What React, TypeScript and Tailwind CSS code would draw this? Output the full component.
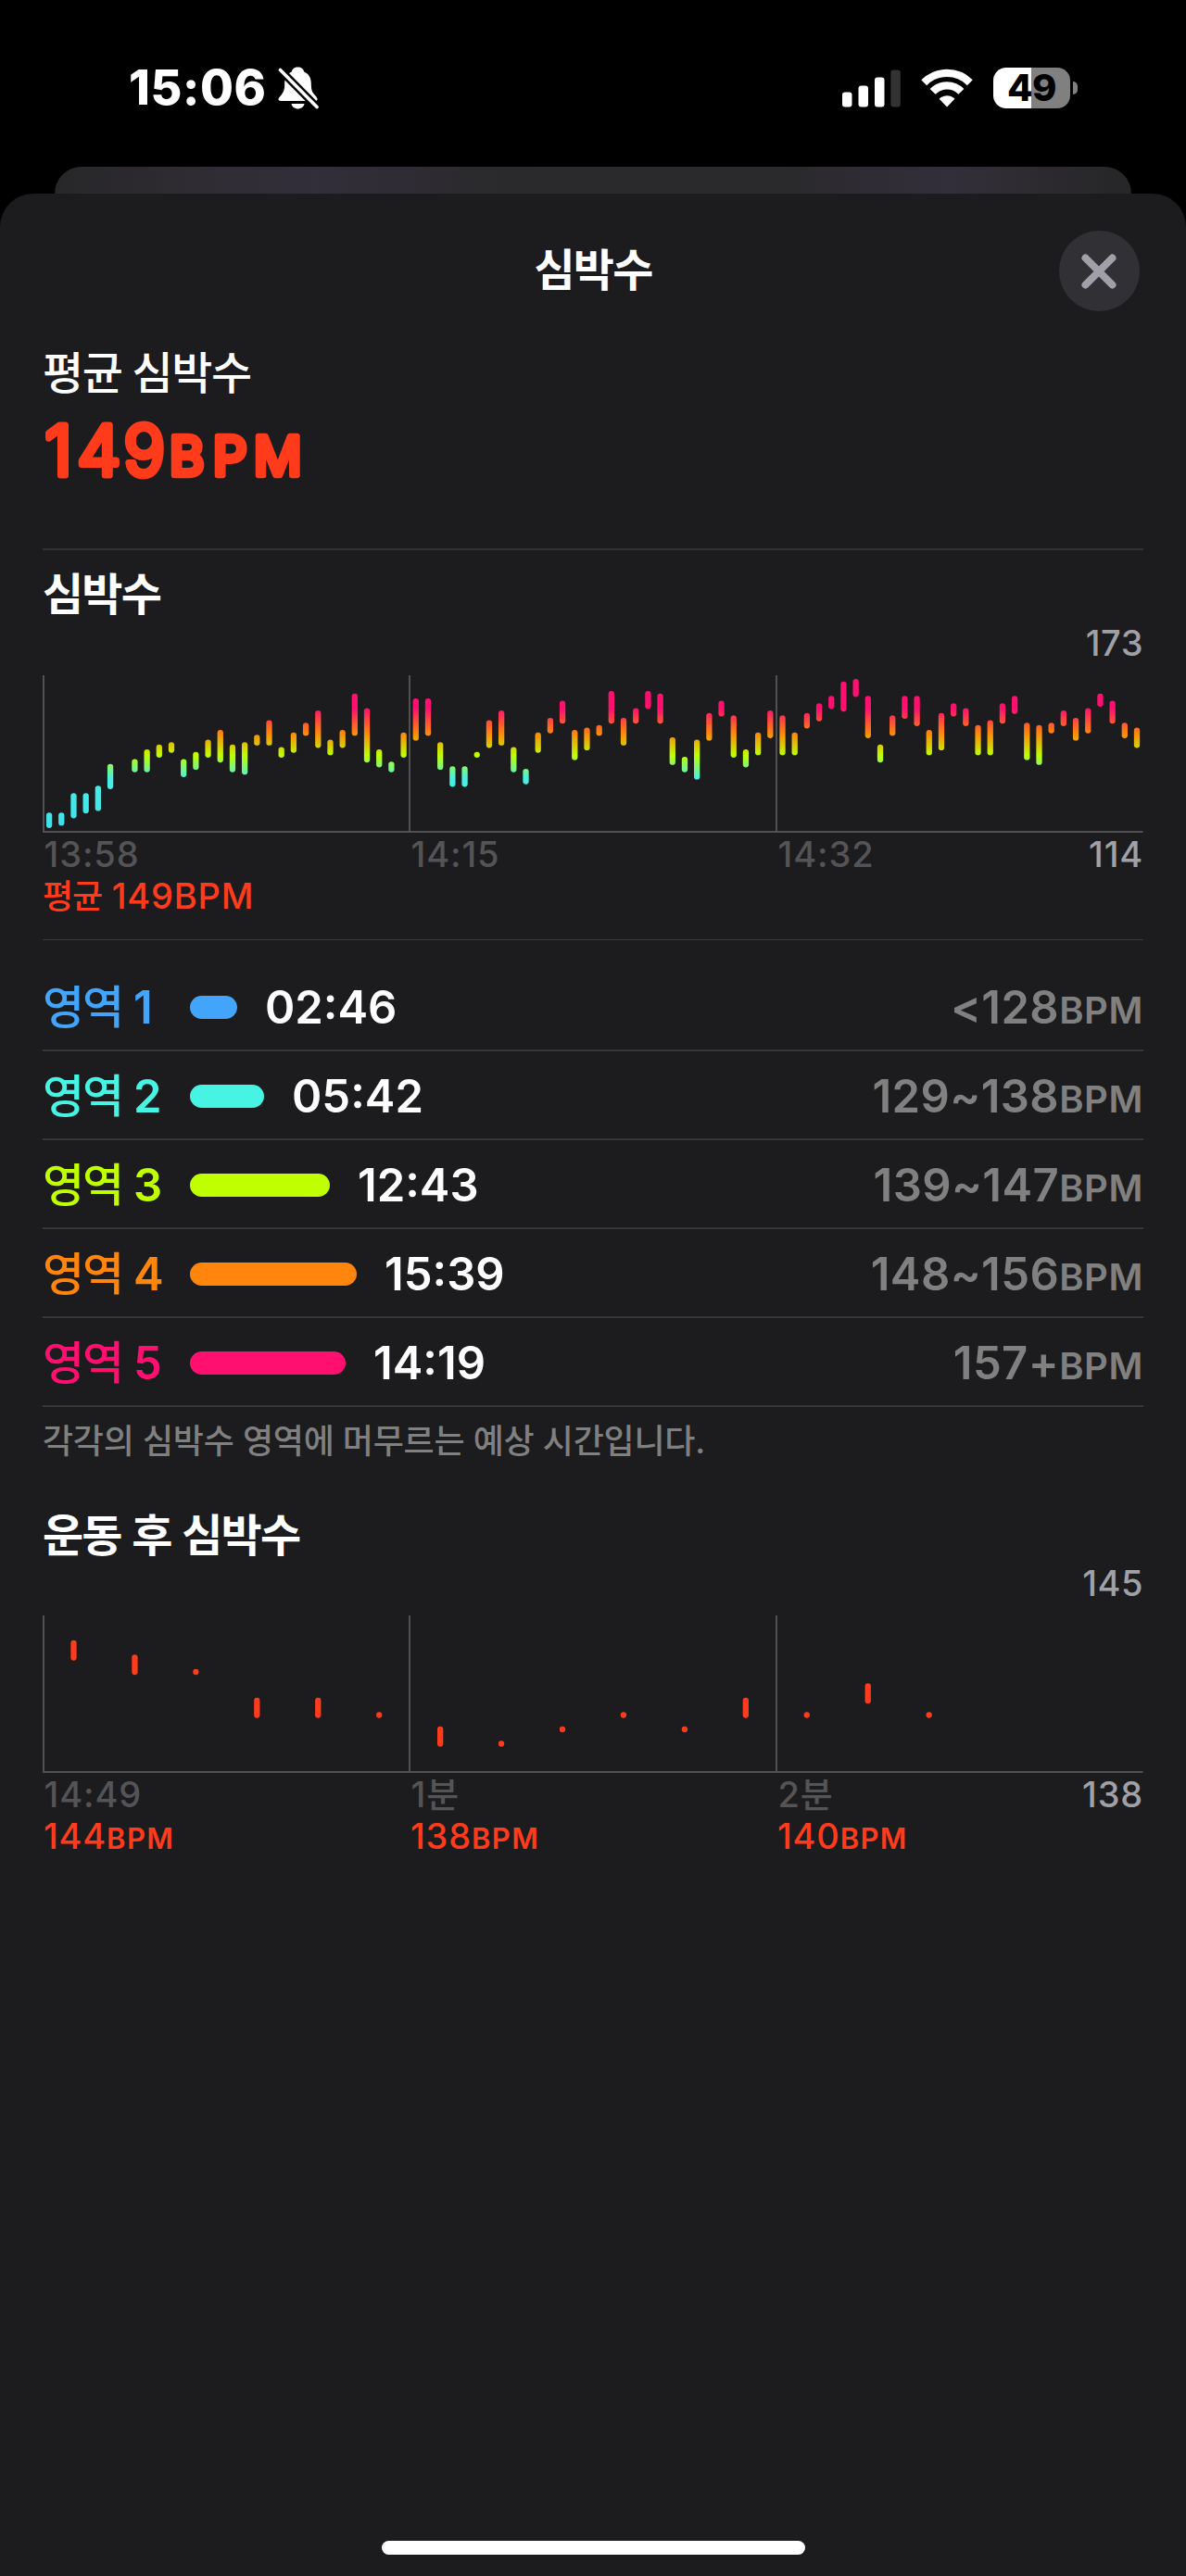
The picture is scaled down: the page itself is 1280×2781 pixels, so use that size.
import { Fragment } from 'react';

type Range = [number, number];

interface Zone {
  name: string;
  time: string;
  range: string;
  barWidth: number;
  text: string;
  bg: string;
}

interface Tick {
  label: string;
  bpm?: string;
}

interface ChartProps {
  id: string;
  data: (Range | null)[];
  first: number;
  step: number;
  yOf: (bpm: number) => number;
  fill: string;
  max: string;
  min: string;
  ticks: Tick[];
}

// [low, high] bpm per slot, null where nothing was measured
const workout: (Range | null)[] = [
  [114, 118], [115, 118], [118, 126], [120, 126], [121, 129], [130, 138], null, [137, 140], [137, 144], [143, 146],
  [145, 147], [135, 140], [138, 143], [143, 148], [141, 152], [137, 146], [136, 147], [148, 150], [148, 156], [143, 145],
  [145, 151], [152, 155], [147, 160], [144, 148], [147, 152], [152, 167], [141, 161], [139, 144], [137, 139], [143, 151],
  [150, 165], [152, 165], [138, 147], [131, 137], [131, 137], [143, 143], [147, 156], [148, 160], [137, 145], [132, 136],
  [145, 151], [153, 157], [157, 164], [142, 152], [146, 153], [152, 154], [157, 168], [148, 157], [157, 161], [163, 168],
  [157, 167], [140, 149], [137, 141], [134, 148], [150, 159], [160, 164], [143, 158], [139, 144], [144, 151], [151, 160],
  [144, 158], [144, 151], [155, 159], [158, 163], [163, 166], [162, 172], [168, 173], [151, 166], [141, 146], [152, 158],
  [159, 166], [156, 166], [144, 152], [146, 159], [160, 163], [156, 161], [144, 154], [144, 156], [157, 163], [161, 166],
  [142, 155], [140, 154], [153, 155], [156, 160], [150, 157], [153, 161], [164, 167], [157, 164], [151, 155], [147, 153],
];

const recovery: Range[] = [
  [144, 145], [143, 144], [143, 143], [140, 141], [140, 141], [140, 140], [138, 139], [138, 138],
  [139, 139], [140, 140], [139, 139], [140, 141], [140, 140], [141, 142], [140, 140],
];

const zones: Zone[] = [
  { name: '영역 1', time: '02:46', range: '<128', barWidth: 51, text: 'text-[#42a5fb]', bg: 'bg-[#42a5fb]' },
  { name: '영역 2', time: '05:42', range: '129~138', barWidth: 80, text: 'text-[#47f3e3]', bg: 'bg-[#47f3e3]' },
  { name: '영역 3', time: '12:43', range: '139~147', barWidth: 151, text: 'text-[#bfff00]', bg: 'bg-[#bfff00]' },
  { name: '영역 4', time: '15:39', range: '148~156', barWidth: 180, text: 'text-[#ff850c]', bg: 'bg-[#ff850c]' },
  { name: '영역 5', time: '14:19', range: '157+', barWidth: 168, text: 'text-[#ff0f6f]', bg: 'bg-[#ff0f6f]' },
];

const workoutY = (bpm: number) => 161.8 - (bpm - 114) * 2.621;
const recoveryY = (bpm: number) => 138.5 - (bpm - 138) * 15.5;

function BellOff() {
  return (
    <svg width="44" height="46" viewBox="0 0 44 46" fill="none">
      <path
        d="M21.5 0.5c-3.6 0-6.2 2.1-6.7 4.9C9.7 7.6 7.2 12 7.2 18c0 6-0.8 9-3.4 12.2C1.6 32.8 0.5 33.8 0.5 35.1 0.5 36.6 1.7 37 3.2 37h36.6c1.7 0 2.7-0.6 2.7-2 0-1.5-1.3-2.6-3.3-5C36.6 27 35.8 24 35.8 18c0-6-2.5-10.4-7.6-12.6C27.7 2.6 25.1 0.5 21.5 0.5z"
        fill="white"
      />
      <path d="M14.5 40h14c-0.6 3.2-3.5 5.5-7 5.5s-6.4-2.3-7-5.5z" fill="white" />
      <path d="M2.5 3.5L42 43.5" stroke="black" strokeWidth="8.5" />
      <path d="M2.5 3.5L42 43.5" stroke="white" strokeWidth="3.6" strokeLinecap="round" />
    </svg>
  );
}

function Signal() {
  return (
    <svg width="63" height="41" viewBox="0 0 63 41" fill="white">
      <rect x="0" y="24.5" width="10.5" height="16" rx="3" />
      <rect x="17.5" y="17.5" width="10.5" height="23" rx="3" />
      <rect x="35" y="8.5" width="10.5" height="32" rx="3" />
      <rect x="52.3" y="0.5" width="10.5" height="40" rx="3" fill="#333333" />
    </svg>
  );
}

function Wifi() {
  return (
    <svg width="56" height="42" viewBox="0 0 56 42" fill="none">
      <g stroke="white" strokeWidth="8.3">
        <path d="M3.2 15.2A35 35 0 0 1 52.8 15.2" />
        <path d="M12.6 24.8A21.5 21.5 0 0 1 43.4 24.8" />
      </g>
      <path d="M28 41.5L19.6 32.8A12 12 0 0 1 36.4 32.8Z" fill="white" />
    </svg>
  );
}

function Battery() {
  return (
    <div className="flex items-center gap-[3px]">
      <div className="flex h-[44px] w-[83px] items-center justify-center rounded-[14px] bg-[linear-gradient(90deg,#fff_49%,#808080_49%)]">
        <span className="text-[40px] leading-none font-extrabold tracking-[-0.5px] text-black">49</span>
      </div>
      <div className="h-[14px] w-[5px] rounded-r-full bg-[#808080]" />
    </div>
  );
}

function StatusBar() {
  return (
    <div className="flex h-[180px] items-center justify-between pt-[10px] pr-[117px] pl-[139px]">
      <div className="flex items-center gap-[12px]">
        <span className="text-[52px] leading-none font-extrabold tracking-[0.6px] text-white">15:06</span>
        <BellOff />
      </div>
      <div className="flex items-center gap-[22px]">
        <Signal />
        <Wifi />
        <Battery />
      </div>
    </div>
  );
}

function Chart({ id, data, first, step, yOf, fill, max, min, ticks }: ChartProps) {
  return (
    <div className="text-[38px] font-medium">
      <div className="flex h-[40px] items-center justify-end leading-none tracking-[0.5px] text-[#a0a0a7]">{max}</div>
      <svg className="mt-[15px] block" width="1188" height="170" viewBox="0 0 1188 170">
        <defs>
          <linearGradient id={id} gradientUnits="userSpaceOnUse" x1="0" y1={yOf(162)} x2="0" y2={yOf(114)}>
            <stop offset="0" stopColor="#ff0f6f" />
            <stop offset="0.208" stopColor="#ff850c" />
            <stop offset="0.4" stopColor="#bfff00" />
            <stop offset="0.6" stopColor="#47f0e3" />
            <stop offset="1" stopColor="#42dfec" />
          </linearGradient>
        </defs>
        <g fill="#515153">
          <rect x="0" y="0" width="2" height="169" />
          <rect x="395" y="0" width="2" height="169" />
          <rect x="791" y="0" width="2" height="169" />
          <rect x="0" y="168" width="1187.5" height="2" />
        </g>
        {data.map((range, i) =>
          range ? (
            <rect
              key={i}
              x={first + i * step - 3.15}
              y={yOf(range[1]) - 3.15}
              width={6.3}
              height={yOf(range[0]) - yOf(range[1]) + 6.3}
              rx={3.15}
              fill={fill}
            />
          ) : null,
        )}
      </svg>
      <div className="grid h-[45px] grid-cols-3 items-center leading-none text-[#545456]">
        {ticks.map((tick, i) => (
          <div key={tick.label} className="flex justify-between pl-[1.5px]">
            <span className="tracking-[0.9px]">{tick.label}</span>
            {i === ticks.length - 1 && <span className="tracking-[0.8px] text-[#a0a0a7]">{min}</span>}
          </div>
        ))}
      </div>
      <div className="grid h-[46px] grid-cols-3 items-center leading-none tracking-[0.8px] text-[#ff3b1c]">
        {ticks.map((tick) => (
          <Fragment key={tick.label}>
            {tick.bpm && (
              <div className="pl-px">
                {tick.bpm}
                <span className="text-[31px] font-semibold tracking-[1.4px]">BPM</span>
              </div>
            )}
          </Fragment>
        ))}
        {!ticks[0].bpm && (
          <div>
            <span className="text-[36px] tracking-[-1.2px]">평균</span> 149BPM
          </div>
        )}
      </div>
    </div>
  );
}

function ZoneRow({ zone }: { zone: Zone }) {
  return (
    <div className="flex h-[96px] items-center border-b-2 border-[#363638] pt-[2px] text-[49px] leading-none font-[560]">
      <div className={`w-[159px] ${zone.text}`}>
        <span className="font-medium tracking-[-2.2px]">{zone.name.slice(0, 2)}</span>
        {zone.name.slice(2)}
      </div>
      <div className={`h-[25px] rounded-full ${zone.bg}`} style={{ width: zone.barWidth }} />
      <div className="ml-[30px] text-white">{zone.time}</div>
      <div className="ml-auto tracking-[0.4px] text-[#808080]">
        {zone.range}
        <span className="text-[40px] font-semibold tracking-[0.6px]">BPM</span>
      </div>
    </div>
  );
}

export default function App() {
  return (
    <div className="flex h-[2781px] w-[1280px] flex-col overflow-hidden bg-black font-['Inter','Noto_Sans_CJK_KR',sans-serif]">
      <StatusBar />

      {/* Edge of the sheet underneath */}
      <div className="mx-[59px] h-[29px] shrink-0 rounded-t-[29px] bg-[linear-gradient(90deg,#272729_0%,#302c33_14%,#322e3a_24%,#302c35_31%,#2b2a2d_39%,#2a2a2c_45%,#2a2a2c_68%,#302c35_77%,#322f3b_83%,#302c33_88%,#272729_98%)]" />

      <div className="flex flex-1 flex-col rounded-t-[36px] bg-[#1c1c1e]">
        <div className="grid h-[167px] grid-cols-3 items-center">
          <h1 className="col-start-2 -mt-[2px] text-center text-[48px] leading-none font-bold tracking-[-1.8px] text-white">심박수</h1>
          <button className="mr-[50px] flex size-[87px] items-center justify-center justify-self-end rounded-full bg-[#313034]">
            <svg width="38" height="38" viewBox="0 0 38 38" stroke="#a1a0a8" strokeWidth="8" strokeLinecap="round">
              <path d="M4.5 4.5L33.5 33.5M33.5 4.5L4.5 33.5" />
            </svg>
          </button>
        </div>

        <div className="px-[46px]">
          <div className="flex h-[53px] items-center text-[48px] leading-none font-medium tracking-[-1.5px] text-white">평균 심박수</div>
          {/* Round joins soften the letter corners */}
          <svg className="mb-[63px] block" width="400" height="100" viewBox="0 0 400 100">
            <g fill="#ff3b1c" stroke="#ff3b1c" strokeLinejoin="round">
              <text x="2.5 37.5 87.5" y="83.5" fontSize="74" strokeWidth="7" className="font-light">149</text>
              <text x="137 184 228" y="83.5" fontSize="57" strokeWidth="6.5" className="font-normal">BPM</text>
            </g>
          </svg>

          <div className="h-[2px] bg-[#323234]" />

          <h2 className="flex h-[80px] items-center pt-[15px] text-[48px] leading-none font-bold tracking-[-1.8px] text-white">심박수</h2>
          <Chart
            id="zones"
            data={workout}
            first={7.1}
            step={13.19}
            yOf={workoutY}
            fill="url(#zones)"
            max="173"
            min="114"
            ticks={[{ label: '13:58' }, { label: '14:15' }, { label: '14:32' }]}
          />

          <div className="mt-[24px] mb-[24px] h-px bg-[#3b3b3d]" />

          {zones.map((zone) => (
            <ZoneRow key={zone.name} zone={zone} />
          ))}
          <p className="flex h-[74px] items-center text-[36px] leading-none font-medium tracking-[-0.25px] text-[#808080]">
            각각의 심박수 영역에 머무르는 예상 시간입니다.
          </p>

          <h2 className="flex h-[96px] items-center pt-[33px] text-[48px] leading-none font-bold tracking-[-1.8px] text-white [word-spacing:2px]">
            운동 후 심박수
          </h2>
          <Chart
            id="recovery"
            data={recovery}
            first={33.5}
            step={65.94}
            yOf={recoveryY}
            fill="#ff3b1c"
            max="145"
            min="138"
            ticks={[
              { label: '14:49', bpm: '144' },
              { label: '1분', bpm: '138' },
              { label: '2분', bpm: '140' },
            ]}
          />
        </div>

        {/* Home indicator */}
        <div className="mx-auto mt-auto mb-[23px] h-[15px] w-[457px] rounded-full bg-white" />
      </div>
    </div>
  );
}
